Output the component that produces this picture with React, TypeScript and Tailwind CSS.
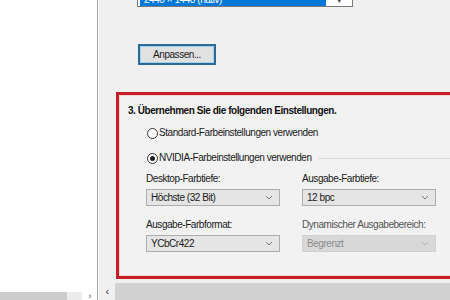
import React from "react";

const font = { fontFamily: '"Liberation Sans", Arial, sans-serif' };

function Chevron({ color = "#6b6b6b" }: { color?: string }) {
  return (
    <svg width="8" height="5" viewBox="0 0 8 5" className="shrink-0">
      <polyline points="1,1 4,4 7,1" fill="none" stroke={color} strokeWidth="1" />
    </svg>
  );
}

function Select({ value, disabled }: { value: string; disabled?: boolean }) {
  return (
    <div
      className={
        disabled
          ? "w-[134px] h-[17px] flex items-center justify-between pl-[4px] pr-[6px] bg-[#d8d8d8] border border-[#d0d0d0] text-[#8c8c8c]"
          : "w-[134px] h-[17px] flex items-center justify-between pl-[4px] pr-[6px] bg-[#e5e5e5] border border-[#adadad] text-[#1a1a1a]"
      }
    >
      <span>{value}</span>
      <Chevron color={disabled ? "#b5b5b5" : "#7a7a7a"} />
    </div>
  );
}

function Radio({ checked, label }: { checked?: boolean; label: string }) {
  return (
    <div className="flex items-center h-[12px]">
      <div className="w-[11px] h-[11px] rounded-full border border-[#333] bg-white flex items-center justify-center">
        {checked && <div className="w-[5px] h-[5px] rounded-full bg-[#222]" />}
      </div>
      <span className="ml-[1px] text-[#1a1a1a]">{label}</span>
    </div>
  );
}

export default function App() {
  return (
    <div
      className="w-[450px] h-[300px] flex overflow-hidden bg-white text-[10px] leading-none tracking-[-0.45px]"
      style={font}
    >
      {/* left pane */}
      <div className="w-[97px] h-full flex flex-col bg-white">
        <div className="flex-1" />
        <div className="h-[8px] flex items-end">
          <div className="w-[67px] h-full bg-[#cdcdcd]" />
          <div className="w-[15px] h-full bg-[#ececec]" />
          <div className="flex-1 h-full flex items-center justify-center text-[#444] text-[9px]">›</div>
        </div>
      </div>
      <div className="w-[1px] h-full bg-[#a9a9a9]" />
      <div className="w-[1px] h-full bg-white" />
      {/* right pane */}
      <div className="flex-1 h-full flex flex-col bg-[#f0f0f0] overflow-hidden">
        <div className="flex-1 flex flex-col overflow-hidden">
          {/* cut dropdown */}
          <div className="ml-[38px] mt-[-13px] w-[216px] h-[20px] flex border border-[#7a7a7a] bg-white">
            <div className="w-[186px] h-full bg-[#0078d7] ml-[2px] text-white flex items-end pb-[1px] pl-[4px]">2440 × 1440 (nativ)</div>
            <div className="flex-1 flex items-end justify-center pb-[2px] text-[#444] text-[7px]">▼</div>
          </div>
          {/* Anpassen button */}
          <div className="ml-[39px] mt-[37px] w-[78px] h-[21px] border-2 border-[#2c6a94] flex items-center justify-center">
            <div className="w-full h-full border border-[#9fd3f2] bg-[#e1e1e1] flex items-center justify-center text-[#1a1a1a]">
              Anpassen...
            </div>
          </div>
          {/* red box */}
          <div className="ml-[17px] mt-[27px] w-[400px] h-[187px] shrink-0 border-[3px] border-[#c42127] flex flex-col">
            <div className="flex-1 border border-[#f6d6d6] bg-[#f2f2f2] flex flex-col pl-[8px]">
              <div className="mt-[10px] font-bold text-[#111]">3. Übernehmen Sie die folgenden Einstellungen.</div>
              <div className="ml-[19px] mt-[11px]">
                <Radio label="Standard-Farbeinstellungen verwenden" />
              </div>
              <div className="ml-[19px] mt-[13px] flex items-center">
                <Radio checked label="NVIDIA-Farbeinstellungen verwenden" />
                <div className="flex-1 h-[1px] bg-[#dcdcdc] ml-[6px]" />
              </div>
              <div className="ml-[18px] mt-[10px] grid grid-cols-[134px_134px] gap-x-[22px]">
                <div className="flex flex-col">
                  <span className="text-[#1a1a1a]">Desktop-Farbtiefe:</span>
                  <div className="mt-[5px]"><Select value="Höchste (32 Bit)" /></div>
                </div>
                <div className="flex flex-col">
                  <span className="text-[#1a1a1a]">Ausgabe-Farbtiefe:</span>
                  <div className="mt-[5px]"><Select value="12 bpc" /></div>
                </div>
                <div className="flex flex-col mt-[14px]">
                  <span className="text-[#1a1a1a]">Ausgabe-Farbformat:</span>
                  <div className="mt-[5px]"><Select value="YCbCr422" /></div>
                </div>
                <div className="flex flex-col mt-[14px]">
                  <span className="text-[#555] whitespace-nowrap">Dynamischer Ausgabebereich:</span>
                  <div className="mt-[5px]"><Select value="Begrenzt" disabled /></div>
                </div>
              </div>
            </div>
          </div>
        </div>
        {/* bottom scrollbar */}
        <div className="h-[17px] shrink-0 flex">
          <div className="w-[16px] h-full bg-[#f0f0f0] flex items-center justify-center text-[#333] text-[11px]">‹</div>
          <div className="flex-1 h-full bg-[#d2d2d2]" />
        </div>
      </div>
    </div>
  );
}
